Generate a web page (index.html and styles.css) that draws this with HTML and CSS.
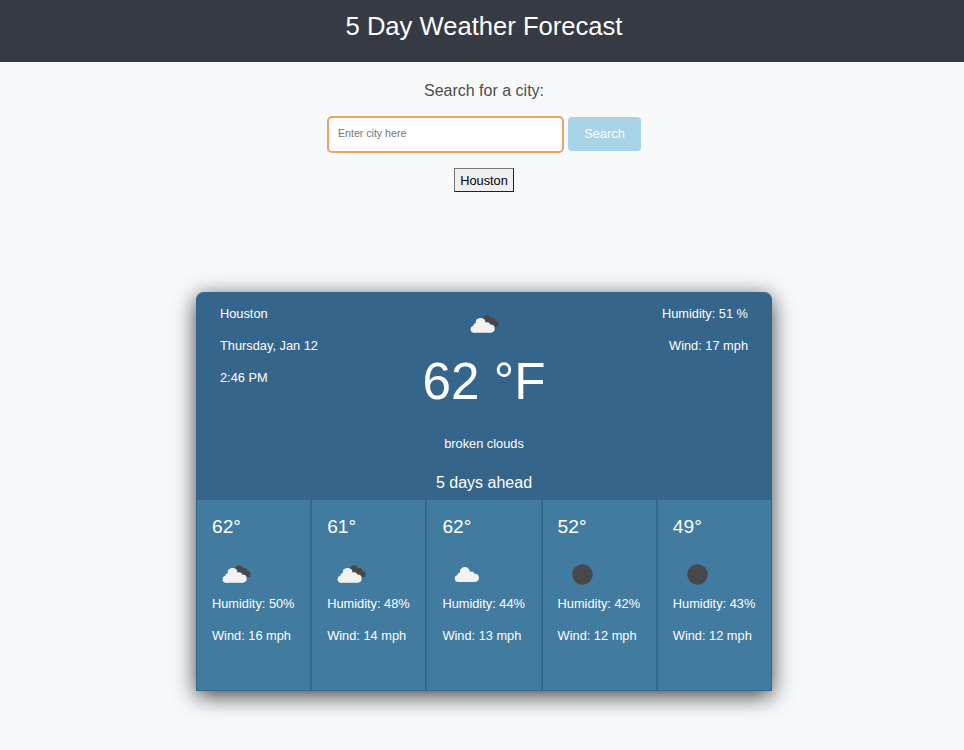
FILE: index.html
```html
<!DOCTYPE html>
<html lang="en">
<head>
<meta charset="utf-8">
<title>5 Day Weather Forecast</title>
<link rel="stylesheet" href="styles.css">
</head>
<body>
<svg class="defs" aria-hidden="true">
  <symbol id="cloud" viewBox="-.3 -.5 50 50">
    <g id="puff" fill="#f2f2f2">
      <circle cx="16" cy="28.9" r="3.5"/>
      <circle cx="17.9" cy="25.6" r="2.7"/>
      <circle cx="22.5" cy="22.6" r="5"/>
      <circle cx="28.9" cy="25.1" r="3.2"/>
      <circle cx="32.5" cy="28.3" r="4.1"/>
      <path d="M16 25h14l3 4v3.4H16z"/>
    </g>
  </symbol>
  <symbol id="broken" viewBox="-.3 -.5 50 50">
    <g fill="#48484a">
      <circle cx="26.7" cy="19.9" r="4.2"/>
      <circle cx="31.9" cy="21.7" r="3.2"/>
      <circle cx="35.2" cy="24.8" r="3.2"/>
      <path d="M24 21l8-2.5 5 6-2.5 3.4-7-1z"/>
    </g>
    <use href="#puff" x="-2.2" y=".8"/>
  </symbol>
  <symbol id="clear" viewBox="0 -.5 50 50"><circle cx="24.5" cy="25" r="10.3" fill="#48484a"/></symbol>
</svg>
<header class="header"><h1>5 Day Weather Forecast</h1></header>
<main>
  <form class="search">
    <label for="city">Search for a city:</label>
    <div class="row">
      <input id="city" type="text" placeholder="Enter city here">
      <button type="button" class="submit">Search</button>
    </div>
    <button type="button" class="history">Houston</button>
  </form>
  <section class="weather">
    <div class="today">
      <div class="side"><p>Houston</p><p>Thursday, Jan 12</p><p>2:46 PM</p></div>
      <div class="current">
        <svg class="icon"><use href="#broken"/></svg>
        <div class="temp">62 °F</div>
        <p>broken clouds</p>
      </div>
      <div class="side right"><p>Humidity: 51 %</p><p>Wind: 17 mph</p></div>
    </div>
    <h2>5 days ahead</h2>
    <div class="days">
      <article class="day"><h3>62°</h3><svg class="icon"><use href="#broken"/></svg><p>Humidity: 50%</p><p>Wind: 16 mph</p></article>
      <article class="day"><h3>61°</h3><svg class="icon"><use href="#broken"/></svg><p>Humidity: 48%</p><p>Wind: 14 mph</p></article>
      <article class="day"><h3>62°</h3><svg class="icon"><use href="#cloud"/></svg><p>Humidity: 44%</p><p>Wind: 13 mph</p></article>
      <article class="day"><h3>52°</h3><svg class="icon"><use href="#clear"/></svg><p>Humidity: 42%</p><p>Wind: 12 mph</p></article>
      <article class="day"><h3>49°</h3><svg class="icon"><use href="#clear"/></svg><p>Humidity: 43%</p><p>Wind: 12 mph</p></article>
    </div>
  </section>
</main>
</body>
</html>
```
FILE: styles.css
```css
* { box-sizing: border-box; }
body, h1, h2, h3, p { margin: 0; font-weight: 400; }
body {
  min-height: 750px;
  background: #f8f9fb;
  color: #fff;
  font-family: "Liberation Sans", Arial, sans-serif;
  font-size: 12.8px;
}
.defs { display: none; }
.header { height: 62px; padding: 11px 0 0 4px; background: #363a42; text-align: center; }
h1 { font-size: 25.6px; line-height: 30px; }
main { padding-left: 4px; }
.search { display: flex; flex-direction: column; align-items: center; }
.search label { margin-top: 19px; color: #4d4d4d; font-size: 16px; line-height: 20px; }
.row { display: flex; align-items: center; gap: 4px; margin-top: 15px; }
input {
  width: 237px;
  height: 37px;
  padding: 0 9px 3px;
  border: 2px solid #e9a565;
  border-radius: 5px;
  background: #fff;
  font: 10.6px "Liberation Sans", Arial, sans-serif;
}
input::placeholder { color: #757575; }
.submit {
  width: 73px;
  height: 34px;
  margin-bottom: 1px;
  padding: 0 0 1px;
  border: 0;
  border-radius: 4px;
  background: #a9d3e7;
  color: #fff;
  font: 12.8px "Liberation Sans", Arial, sans-serif;
}
.history {
  width: 60px;
  height: 24px;
  margin-top: 15px;
  padding: 1px 0 0;
  border: 1px solid;
  border-color: #767676 #212121 #212121 #767676;
  background: #efefef;
  color: #000;
  font: 12.8px "Liberation Sans", Arial, sans-serif;
}
.weather {
  width: 576px;
  height: 399px;
  margin: 100px auto 0;
  border-radius: 8px 8px 0 0;
  background: #35658b;
  box-shadow: 0 5px 22px rgba(0, 0, 0, .75);
}
.today { display: grid; grid-template-columns: 1fr 1fr 1fr; height: 181px; padding: 6px 24px 0; }
.today p { line-height: 32px; }
.right { text-align: right; }
.current { display: flex; flex-direction: column; align-items: center; }
.icon { display: block; width: 50px; height: 50px; }
.current .icon { margin: 1px 0 0 1px; }
.temp { height: 79px; font-size: 51.2px; line-height: 66px; }
h2 { font-size: 16px; line-height: 20px; text-align: center; }
.days { display: grid; grid-template-columns: repeat(5, 1fr); margin-top: 6px; }
.day { height: 192px; padding: 14px 0 0 15px; border: 1px solid #35658b; background: #427ba0; }
.day h3 { height: 35px; font-size: 19.2px; line-height: 26px; }
.day p { height: 32px; line-height: 10px; }
```
